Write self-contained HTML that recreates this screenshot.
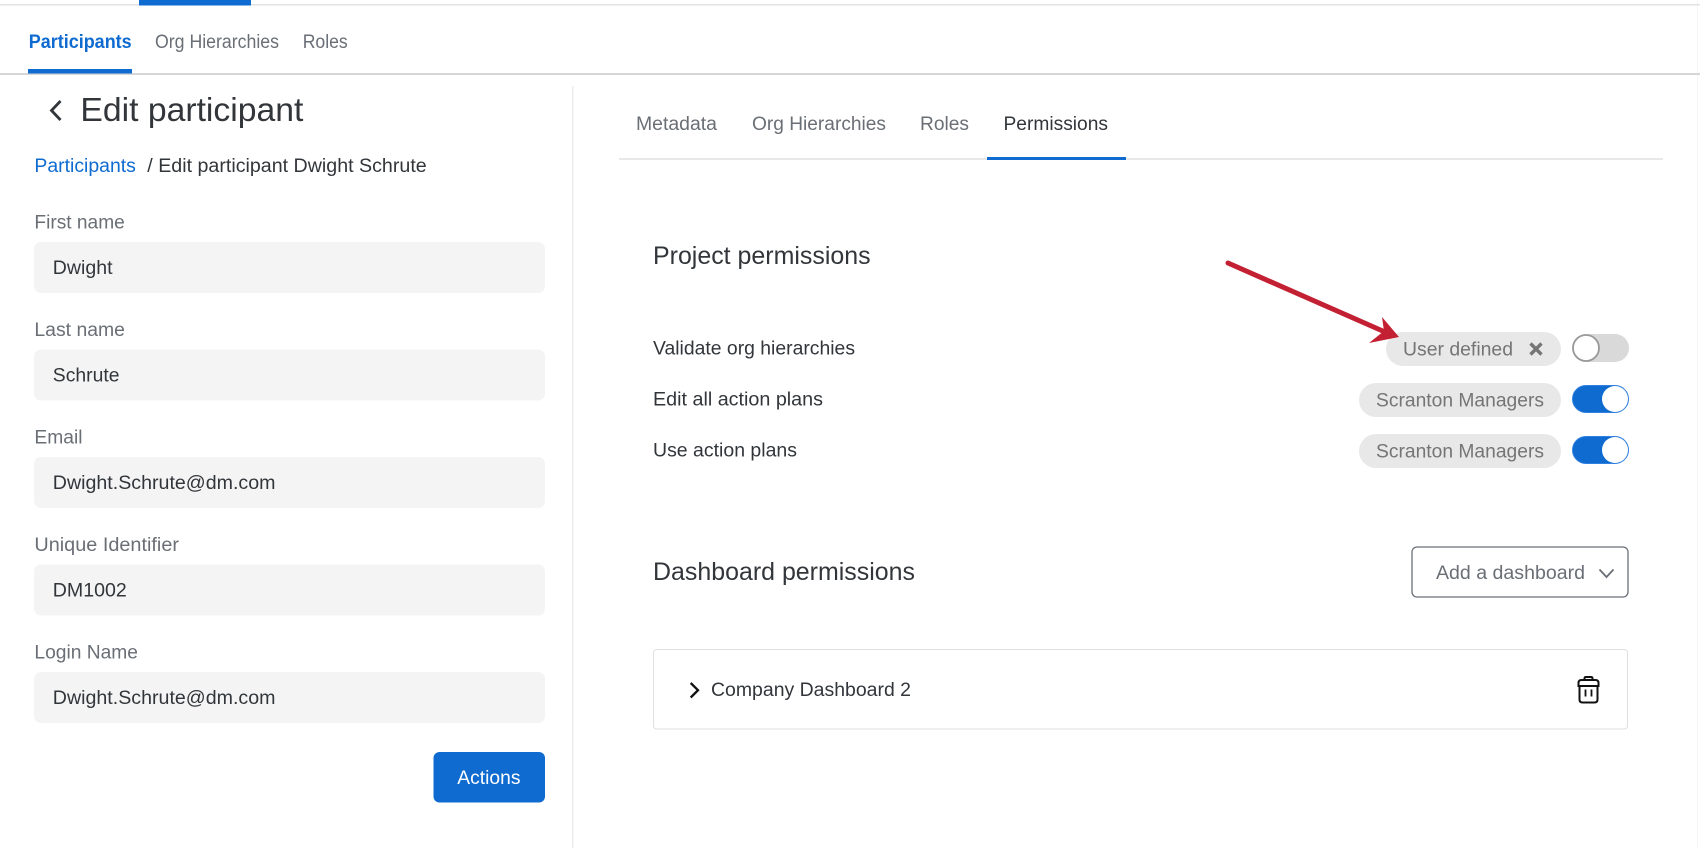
<!DOCTYPE html>
<html lang="en">
<head>
<meta charset="utf-8">
<title>Edit participant</title>
<style>
html,body{margin:0;padding:0;background:#fff;width:1700px;height:848px;overflow:hidden}
svg{display:block;filter:blur(.3px)}
text{font-family:"Liberation Sans",sans-serif;font-size:19px;fill:#32363a}
.g{fill:#6a6f76}
.b{fill:#0f6bd0}
.c{fill:#757575}
</style>
</head>
<body>
<svg width="1700" height="848" viewBox="0 0 1700 848" xmlns="http://www.w3.org/2000/svg">
<rect width="1700" height="848" fill="#fff"/>
<rect x="1697" y="0" width="1" height="848" fill="#f6f6f6"/>
<!-- top bar -->
<rect x="0" y="4" width="1700" height="1.5" fill="#e3e3e3"/>
<rect x="139" y="0" width="112" height="5.5" fill="#0f6bd0"/>
<text class="b" x="28.7" y="48" font-weight="bold" textLength="103" lengthAdjust="spacingAndGlyphs">Participants</text>
<text class="g" x="155" y="48" textLength="124" lengthAdjust="spacingAndGlyphs">Org Hierarchies</text>
<text class="g" x="302.7" y="48" textLength="45" lengthAdjust="spacingAndGlyphs">Roles</text>
<rect x="0" y="73" width="1700" height="2" fill="#d5d6d7"/>
<rect x="28" y="69" width="104" height="4.5" fill="#0f6bd0"/>
<!-- divider -->
<rect x="572" y="86" width="1.5" height="762" fill="#ececec"/>
<!-- left panel -->
<path d="M60.5 101 L51.5 110.5 L60.5 120" fill="none" stroke="#32363a" stroke-width="2.8"/>
<text x="80.4" y="121" style="font-size:33px" textLength="223" lengthAdjust="spacingAndGlyphs">Edit participant</text>
<text class="b" x="34.4" y="172" textLength="101.5" lengthAdjust="spacingAndGlyphs">Participants</text>
<text x="147.3" y="172" textLength="279.4" lengthAdjust="spacingAndGlyphs">/ Edit participant Dwight Schrute</text>

<text class="g" x="34.4" y="228.5" textLength="90.4" lengthAdjust="spacingAndGlyphs">First name</text>
<rect x="34" y="242" width="511" height="51" rx="7" fill="#f4f4f4"/>
<text x="52.8" y="274" textLength="59.7" lengthAdjust="spacingAndGlyphs">Dwight</text>

<text class="g" x="34.4" y="336" textLength="90.6" lengthAdjust="spacingAndGlyphs">Last name</text>
<rect x="34" y="349.5" width="511" height="51" rx="7" fill="#f4f4f4"/>
<text x="52.8" y="381.5" textLength="66.7" lengthAdjust="spacingAndGlyphs">Schrute</text>

<text class="g" x="34.4" y="443.5" textLength="48.1" lengthAdjust="spacingAndGlyphs">Email</text>
<rect x="34" y="457" width="511" height="51" rx="7" fill="#f4f4f4"/>
<text x="52.8" y="489" textLength="222.7" lengthAdjust="spacingAndGlyphs">Dwight.Schrute@dm.com</text>

<text class="g" x="34.4" y="551" textLength="144.6" lengthAdjust="spacingAndGlyphs">Unique Identifier</text>
<rect x="34" y="564.5" width="511" height="51" rx="7" fill="#f4f4f4"/>
<text x="52.8" y="596.5" textLength="74" lengthAdjust="spacingAndGlyphs">DM1002</text>

<text class="g" x="34.4" y="658.5" textLength="103.6" lengthAdjust="spacingAndGlyphs">Login Name</text>
<rect x="34" y="672" width="511" height="51" rx="7" fill="#f4f4f4"/>
<text x="52.8" y="704" textLength="222.7" lengthAdjust="spacingAndGlyphs">Dwight.Schrute@dm.com</text>

<rect x="433.5" y="752" width="111.5" height="50.5" rx="6" fill="#0f6bd0"/>
<text x="457.3" y="784" style="fill:#fff" textLength="63.2" lengthAdjust="spacingAndGlyphs">Actions</text>

<!-- right tabs -->
<text class="g" x="636" y="130" textLength="81" lengthAdjust="spacingAndGlyphs">Metadata</text>
<text class="g" x="752" y="130" textLength="134" lengthAdjust="spacingAndGlyphs">Org Hierarchies</text>
<text class="g" x="920" y="130" textLength="49" lengthAdjust="spacingAndGlyphs">Roles</text>
<text x="1003.5" y="130" textLength="104.5" lengthAdjust="spacingAndGlyphs">Permissions</text>
<rect x="619" y="158" width="1044" height="2" fill="#e8e8e8"/>
<rect x="987" y="157" width="139" height="3" fill="#0f6bd0"/>

<!-- project permissions -->
<text x="653" y="264" style="font-size:25px" textLength="217.6" lengthAdjust="spacingAndGlyphs">Project permissions</text>
<text x="653" y="354.5" textLength="202" lengthAdjust="spacingAndGlyphs">Validate org hierarchies</text>
<text x="653" y="405.5" textLength="170" lengthAdjust="spacingAndGlyphs">Edit all action plans</text>
<text x="653" y="456.5" textLength="144" lengthAdjust="spacingAndGlyphs">Use action plans</text>

<rect x="1386" y="332" width="175" height="34" rx="17" fill="#e8e8e8"/>
<text class="c" x="1403" y="355.7" textLength="110" lengthAdjust="spacingAndGlyphs">User defined</text>
<path d="M1530.5 343.5 L1541.5 354.5 M1541.5 343.5 L1530.5 354.5" stroke="#757575" stroke-width="3.4" fill="none"/>
<rect x="1572" y="334" width="57" height="28" rx="14" fill="#d9d9d9"/>
<circle cx="1586" cy="348" r="13" fill="#fff" stroke="#9a9a9a" stroke-width="1.8"/>

<rect x="1359" y="383" width="202" height="34" rx="17" fill="#e8e8e8"/>
<text class="c" x="1376" y="406.7" textLength="168" lengthAdjust="spacingAndGlyphs">Scranton Managers</text>
<rect x="1572.5" y="385.5" width="56" height="27" rx="13.5" fill="#0f6bd0" stroke="#2f80e0"/>
<circle cx="1615" cy="399" r="13" fill="#fff"/>

<rect x="1359" y="434" width="202" height="34" rx="17" fill="#e8e8e8"/>
<text class="c" x="1376" y="457.7" textLength="168" lengthAdjust="spacingAndGlyphs">Scranton Managers</text>
<rect x="1572.5" y="436.5" width="56" height="27" rx="13.5" fill="#0f6bd0" stroke="#2f80e0"/>
<circle cx="1615" cy="450" r="13" fill="#fff"/>

<!-- arrow -->
<path d="M1228 263 L1385 332" stroke="#c32033" stroke-width="5" stroke-linecap="round" fill="none"/>
<path d="M1382 317 L1399 337 L1369 343 L1384 331 Z" fill="#c32033"/>

<!-- dashboard permissions -->
<text x="653" y="580" style="font-size:25px" textLength="262" lengthAdjust="spacingAndGlyphs">Dashboard permissions</text>
<rect x="1412" y="547" width="216" height="50" rx="5" fill="#fff" stroke="#6b7078" stroke-width="1.3"/>
<text class="g" x="1436" y="579" textLength="149" lengthAdjust="spacingAndGlyphs">Add a dashboard</text>
<path d="M1599.5 569.5 L1606.5 577 L1613.5 569.5" fill="none" stroke="#6a6f76" stroke-width="1.8"/>

<rect x="653.5" y="649.5" width="974" height="79.5" rx="3" fill="#fff" stroke="#e0e0e0" stroke-width="1.1"/>
<path d="M690.7 683 L698 690.2 L690.7 697.5" fill="none" stroke="#111" stroke-width="2.3"/>
<text x="711" y="696" textLength="200" lengthAdjust="spacingAndGlyphs">Company Dashboard 2</text>

<!-- trash -->
<g fill="none" stroke="#111" stroke-width="2">
<path d="M1584.5 680 V678.5 Q1584.5 677 1586 677 H1591 Q1592.5 677 1592.5 678.5 V680"/>
<path d="M1578.5 686 V683 Q1578.5 680 1581.5 680 H1595.5 Q1598.5 680 1598.5 683 V686 Z"/>
<path d="M1579.5 686 V699.5 Q1579.5 702.5 1582.5 702.5 H1594.5 Q1597.5 702.5 1597.5 699.5 V686"/>
<path d="M1585.5 689.5 V696.5 M1591.5 689.5 V696.5" stroke-width="1.8"/>
</g>
</svg>
</body>
</html>
